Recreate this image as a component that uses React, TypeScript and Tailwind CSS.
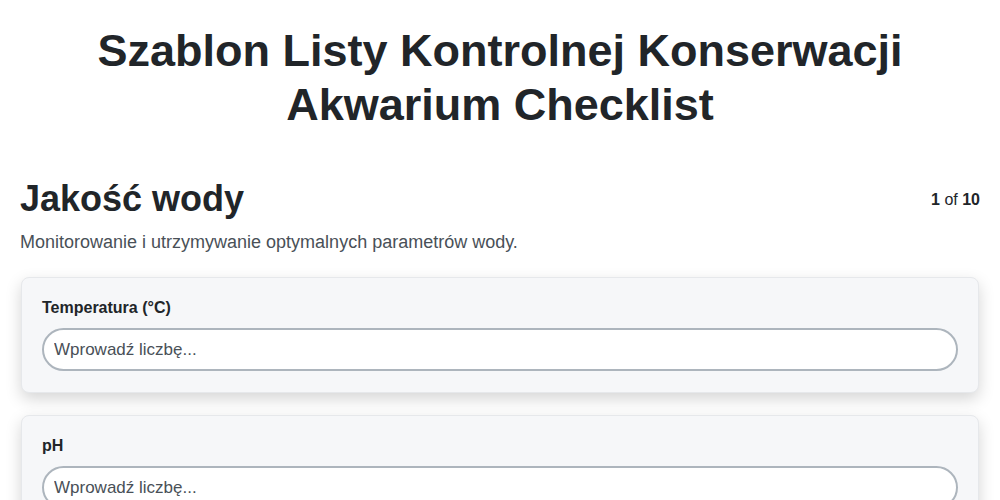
import { useState } from "react";

interface Field {
  id: string;
  label: string;
}

const fields: Field[] = [
  { id: "temp", label: "Temperatura (°C)" },
  { id: "ph", label: "pH" },
  { id: "amoniak", label: "Amoniak (ppm)" },
];

export default function App() {
  const [values, setValues] = useState<Record<string, string>>({});

  return (
    <div className="min-h-screen bg-white px-5 pt-6 pb-10 font-['Liberation_Sans',Arial,sans-serif] text-[#212529]">
      <h1 className="mx-auto max-w-[880px] text-center text-[45px] font-bold leading-[54px]">
        Szablon Listy Kontrolnej Konserwacji Akwarium Checklist
      </h1>

      <div className="mt-[47px] flex items-start justify-between">
        <h2 className="text-4xl font-bold leading-10">Jakość wody</h2>
        <div className="pt-[9px] text-base leading-6">
          <span className="font-bold">1</span> of <span className="font-bold">10</span>
        </div>
      </div>
      <p className="mt-[10px] text-lg leading-[27px] text-[#495057]">
        Monitorowanie i utrzymywanie optymalnych parametrów wody.
      </p>

      <div className="mt-[21px] flex flex-col gap-[22px]">
        {fields.map((f) => (
          <div
            key={f.id}
            className="mx-px rounded-lg border border-[#e6e8eb] bg-[#f6f7f9] px-5 pt-[18px] pb-[21px] shadow-[0_6px_16px_rgba(0,0,0,0.17)]"
          >
            <label htmlFor={f.id} className="mb-2 block text-base font-bold leading-6">
              {f.label}
            </label>
            <input
              id={f.id}
              type="text"
              placeholder="Wprowadź liczbę..."
              value={values[f.id] ?? ""}
              onChange={(e) => setValues({ ...values, [f.id]: e.target.value })}
              className="block h-[43px] w-full rounded-full border-2 border-[#adb5bd] bg-white px-[10px] text-[17px] text-[#212529] outline-none placeholder:text-[#495057]"
            />
          </div>
        ))}
      </div>
    </div>
  );
}
